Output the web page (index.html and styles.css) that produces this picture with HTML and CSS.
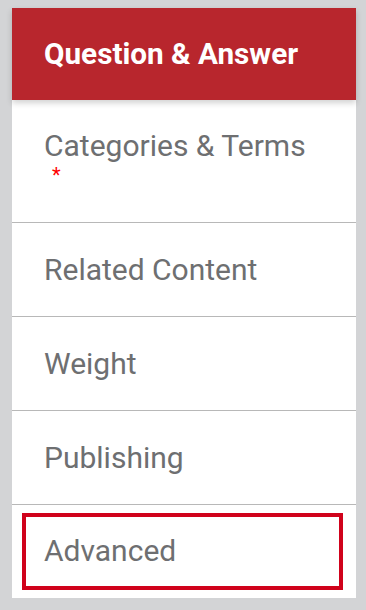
FILE: index.html
```html
<!DOCTYPE html>
<html>
<head>
<meta charset="utf-8">
<link rel="stylesheet" href="styles.css">
</head>
<body>
<nav class="panel">
  <div class="header">Question &amp; Answer</div>
  <ul class="menu">
    <li class="item item-first">Categories &amp; Terms<span class="req">*</span></li>
    <li class="item">Related Content</li>
    <li class="item">Weight</li>
    <li class="item">Publishing</li>
    <li class="item item-active"><div class="focus">Advanced</div></li>
  </ul>
</nav>
</body>
</html>
```

FILE: styles.css
```css
html, body {
  margin: 0;
  padding: 0;
  background: #d3d4d6;
}
body {
  padding: 8px 10px 12px 12px;
  font-family: Roboto, "Liberation Sans", sans-serif;
}
.panel {
  background: #ffffff;
  width: 344px;
}
.header {
  position: relative;
  z-index: 1;
  background: #b8262d;
  color: #ffffff;
  font-weight: 700;
  font-size: 29.7px;
  line-height: 35px;
  padding: 28px 32px 29px 32px;
  box-shadow: 0 3px 6px rgba(0, 0, 0, 0.18);
}
.menu {
  list-style: none;
  margin: 0;
  padding: 0;
}
.item {
  font-size: 30px;
  line-height: 35px;
  color: #6e6f71;
  padding: 29px 32px 29px 32px;
  border-bottom: 1px solid #b8b8b8;
}
.item-first {
  padding-top: 28px;
  padding-bottom: 35px;
}
.req {
  display: block;
  color: #ff0000;
  font-size: 20px;
  line-height: 24px;
  padding-left: 8px;
}
.item-active {
  border-bottom: none;
  padding: 8px 13px 8px 10px;
}
.focus {
  border: 4px solid #d0021b;
  padding: 16px 18px 18px 18px;
}
```
